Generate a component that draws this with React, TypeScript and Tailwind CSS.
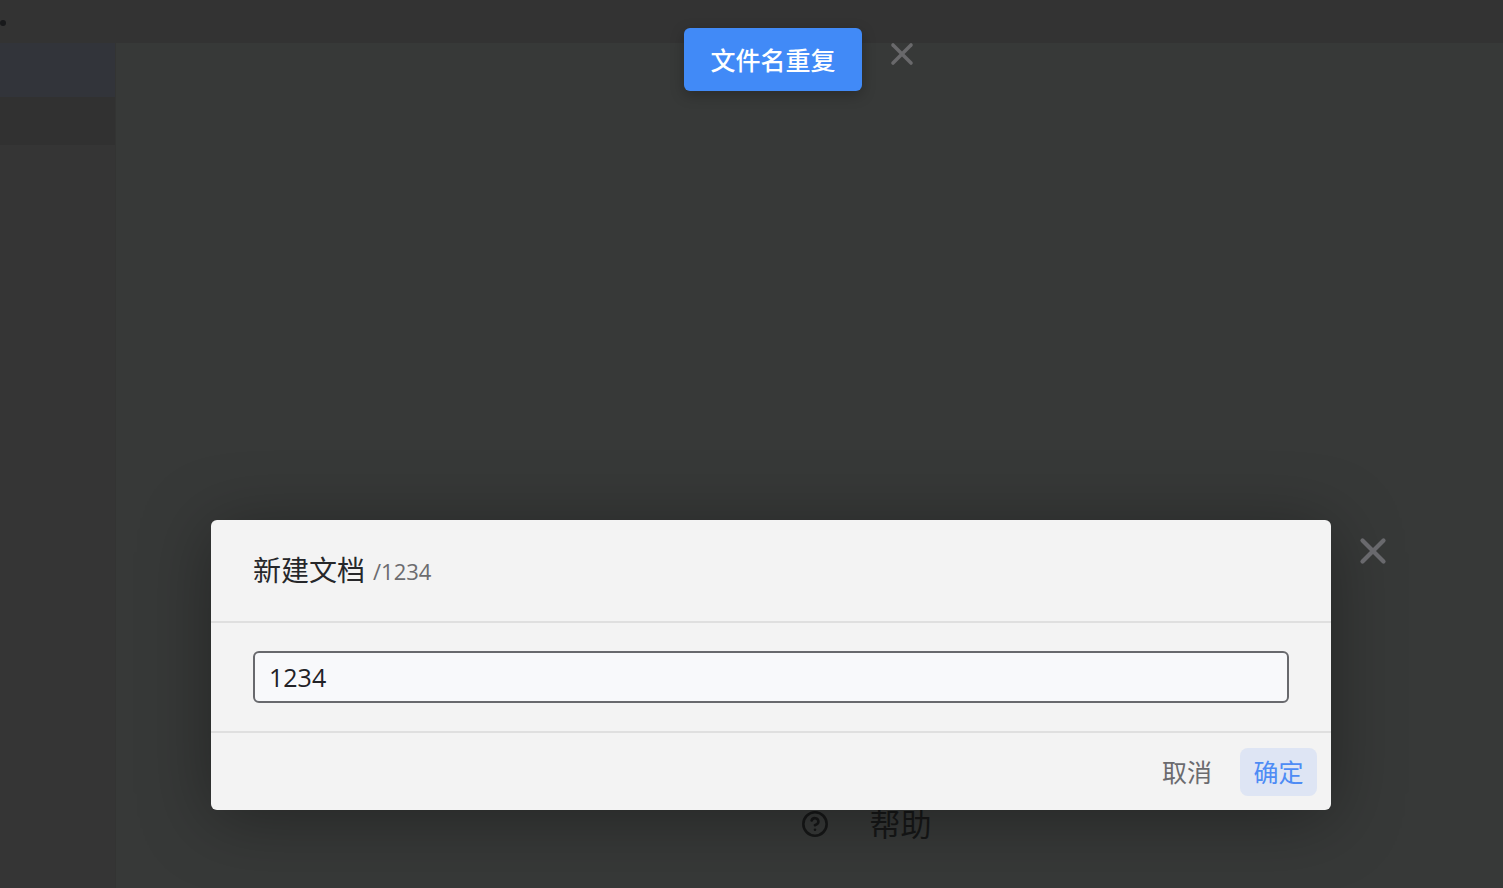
import { CircleHelp, X } from "lucide-react";

const font = "font-['Open_Sans','Noto_Sans_CJK_SC',sans-serif]";

export default function App() {
  return (
    <div className={`relative h-[888px] w-[1503px] overflow-hidden bg-[#373938] ${font}`}>
      {/* dimmed page behind the dialog */}
      <header className="relative h-[43px] bg-[#333333]">
        <span className="absolute left-0 top-[20px] h-[6px] w-[6px] rounded-full bg-[#18191b]" />
      </header>
      <div className="flex h-[845px]">
        <aside className="w-[116px] shrink-0 border-r border-[#333433] bg-[#353535]">
          <div className="h-[54px] bg-[#32343a]" />
          <div className="h-[48px] bg-[#313131]" />
        </aside>
        <main className="flex flex-1 items-end justify-center pb-[42px] pl-[113px]">
          <div className="flex items-center gap-[41px] text-[#161717]">
            <CircleHelp className="h-[28px] w-[28px]" strokeWidth={2.2} />
            <span className="text-[31px] leading-[44px]">帮助</span>
          </div>
        </main>
      </div>

      {/* toast */}
      <div className="absolute left-[684px] top-[28px] flex h-[63px] w-[178px] items-center justify-center rounded-md bg-[#418af7] pt-[2px] text-[25px] font-medium text-white shadow-[0_4px_14px_rgba(0,0,0,0.25)]">
        文件名重复
      </div>
      <X className="absolute left-[884px] top-[36px] h-[36px] w-[36px] text-[#69696b]" strokeWidth={2.4} />

      {/* dialog */}
      <div className="absolute left-[211px] top-[520px] flex h-[290px] w-[1120px] flex-col rounded-md bg-[#f3f3f3] shadow-[0_8px_70px_rgba(0,0,0,0.35)]">
        <div className="flex h-[103px] items-center border-b-2 border-[#dfdfdf] px-[42px]">
          <span className="mb-[2px] text-[28px] text-[#26272a]">新建文档</span>
          <span className="ml-[8px] mt-[2px] text-[22px] text-[#6c6c6f]">/1234</span>
        </div>
        <div className="flex h-[110px] items-center border-b-2 border-[#dfdfdf] px-[42px]">
          <input
            readOnly
            value="1234"
            className="h-[52px] w-full rounded-md border-2 border-[#68696d] bg-[#f8f9fb] px-[14px] text-[25px] text-[#222226] outline-none"
          />
        </div>
        <div className="flex flex-1 items-center justify-end gap-[21px] px-[14px]">
          <button className="h-[48px] w-[64px] rounded-md pt-[2px] text-[25px] text-[#6b6b6e]">取消</button>
          <button className="h-[48px] w-[77px] rounded-lg bg-[#dee5f4] pt-[2px] text-[25px] text-[#4e8cf5]">确定</button>
        </div>
      </div>
      <X className="absolute left-[1352px] top-[530px] h-[42px] w-[42px] text-[#69696d]" strokeWidth={2.4} />
    </div>
  );
}
